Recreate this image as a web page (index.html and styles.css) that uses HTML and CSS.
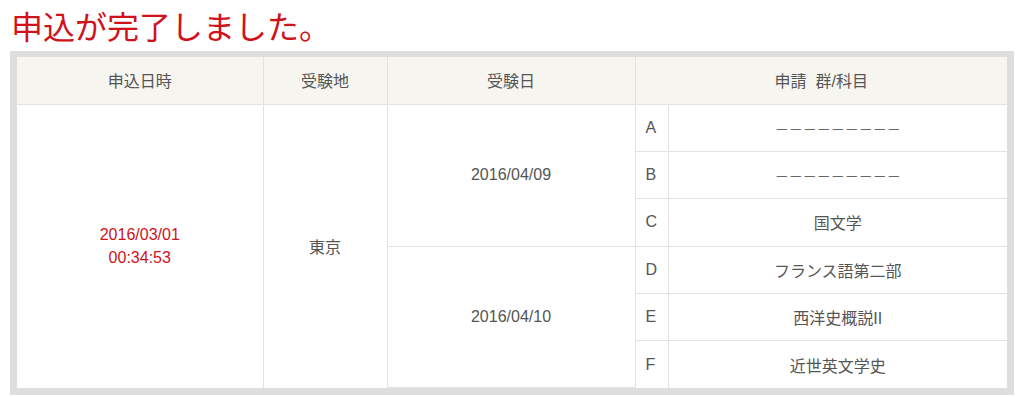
FILE: index.html
```html
<!DOCTYPE html>
<html lang="ja">
<head>
<meta charset="utf-8">
<link rel="stylesheet" href="styles.css">
</head>
<body>
<div class="page">
  <h1 class="title">申込が完了しました。</h1>
  <div class="frame">
    <table class="result">
      <colgroup>
        <col class="c1"><col class="c2"><col class="c3"><col class="c4"><col class="c5">
      </colgroup>
      <thead>
        <tr><th>申込日時</th><th>受験地</th><th>受験日</th><th colspan="2">申請&nbsp;&nbsp;群/科目</th></tr>
      </thead>
      <tbody>
        <tr>
          <td rowspan="6" class="red">2016/03/01<br>00:34:53</td>
          <td rowspan="6">東京</td>
          <td rowspan="3">2016/04/09</td>
          <td class="letter">A</td><td class="dash">－－－－－－－－－</td>
        </tr>
        <tr><td class="letter">B</td><td class="dash">－－－－－－－－－</td></tr>
        <tr><td class="letter">C</td><td>国文学</td></tr>
        <tr><td rowspan="3">2016/04/10</td><td class="letter">D</td><td>フランス語第二部</td></tr>
        <tr><td class="letter">E</td><td>西洋史概説II</td></tr>
        <tr><td class="letter">F</td><td>近世英文学史</td></tr>
      </tbody>
    </table>
  </div>
</div>
</body>
</html>
```
FILE: styles.css
```css
html, body { margin: 0; padding: 0; background: #fff; }
.page {
  padding: 6px 10px 0 10px;
  font-family: "Liberation Sans", "Noto Sans CJK JP", sans-serif;
}
.title {
  margin: 0 0 7px 1px;
  font-size: 32px;
  line-height: 38px;
  font-weight: normal;
  color: #d0121b;
  font-family: "Noto Sans CJK JP", sans-serif;
}
.frame {
  background: #dedede;
  padding: 6px 7px 7px 7px;
  width: 990px;
}
.result {
  border-collapse: collapse;
  table-layout: fixed;
  width: 990px;
  background: #fff;
  font-size: 16px;
  color: #555;
}
.c1 { width: 246px; }
.c2 { width: 124px; }
.c3 { width: 248px; }
.c4 { width: 33px; }
.c5 { width: 339px; }
.result th, .result td {
  border: 1px solid #e2e2e2;
  text-align: center;
  vertical-align: middle;
  padding: 0;
  height: 46.4px;
}
.result th {
  background: #f7f5f0;
  font-weight: normal;
  height: 46.5px;
}
.result thead tr th { border-top: none; }
.result th:first-child, .result tbody tr:first-child td:first-child { border-left: none; }
.result th:last-child, .result td:last-child { border-right: none; }
.result tbody tr:last-child td, .result td[rowspan="6"] { border-bottom: none; }
.result td.letter { text-align: left; padding-left: 10px; }
.result td.dash { font-size: 14px; color: #666; }
.result td.red { color: #d0121b; line-height: 23px; }
```
